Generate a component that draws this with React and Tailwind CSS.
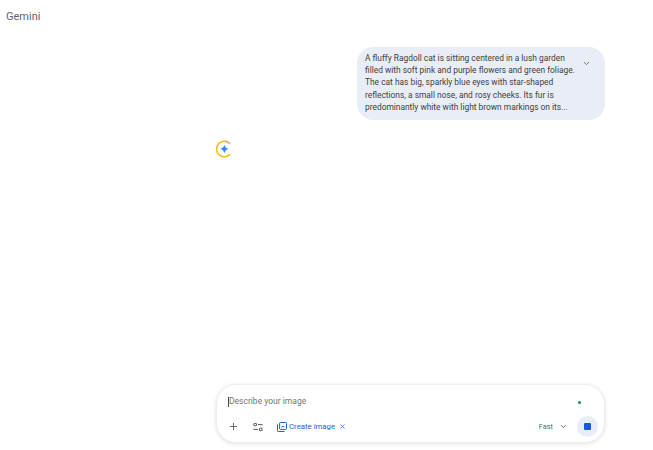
import { Plus, ChevronDown, X } from "lucide-react";

const font = { fontFamily: "Roboto, sans-serif" };

const ToolsIcon = () => (
  <svg width="10" height="10" viewBox="0 0 10 10" fill="none" stroke="#5f6368" strokeWidth="1.1">
    <circle cx="2.2" cy="2.6" r="1.4" />
    <path d="M5 2.6h4.5" />
    <path d="M0.5 7.4h4.5" />
    <circle cx="7.8" cy="7.4" r="1.4" />
  </svg>
);

const CreateImageIcon = () => (
  <svg width="10" height="10" viewBox="0 0 10 10" fill="none" stroke="#1a62d6" strokeWidth="1">
    <rect x="2.6" y="0.5" width="6.9" height="6.9" rx="0.8" />
    <path d="M0.5 2.4v6.3a0.8 0.8 0 0 0 .8 .8h6.3" />
    <path d="M4.6 5.4l1.2-1.4 1 1.1 .5-.5" />
  </svg>
);

const Spinner = () => (
  <svg width="18" height="18" viewBox="1 0 18 18" fill="none">
    <path d="M14.6 3.2A7.8 7.8 0 1 0 14.6 14.8" stroke="#fbbc04" strokeWidth="1.5" strokeLinecap="round" />
    <path d="M14.6 3.2A7.8 7.8 0 0 0 10.5 1.3" stroke="#f6a58a" strokeWidth="1.5" strokeLinecap="round" />
    <path d="M9.4 4.6c.4 2.6 1.6 3.9 4.2 4.4-2.6.5-3.8 1.8-4.2 4.4-.4-2.6-1.6-3.9-4.2-4.4 2.6-.5 3.8-1.8 4.2-4.4z" fill="#3b82f6" />
  </svg>
);

export default function App() {
  return (
    <div className="flex h-[450px] w-[653px] flex-col overflow-hidden bg-white" style={font}>
      <div className="px-[6px] pt-[9px] text-[11px] leading-[15px] text-[#5f6368]">Gemini</div>

      <div className="ml-[216px] flex w-[389px] flex-1 flex-col">
        <div className="mt-[23px] flex w-[248px] self-end rounded-[16px] bg-[#e9eef6] pl-[8px] pr-[14px] pt-[5px] pb-[7px]">
          <p className="w-[214px] text-[8.4px] leading-[12.2px] text-[#3c3f41]">
            A fluffy Ragdoll cat is sitting centered in a lush garden filled with soft pink and purple flowers and green foliage. The cat has big, sparkly blue eyes with star-shaped reflections, a small nose, and rosy cheeks. Its fur is predominantly white with light brown markings on its...
          </p>
          <ChevronDown size={9} strokeWidth={2} className="ml-auto mt-[7px] text-[#444746]" />
        </div>

        <div className="mt-[20px] flex-1">
          <Spinner />
        </div>

        <div className="mb-[7px] flex h-[59px] flex-col rounded-[20px] border border-[#eceef0] bg-white pl-[11px] pr-[6px] shadow-[0_1px_4px_rgba(0,0,0,0.12)]">
          <div className="flex h-[30px] items-center pt-[3px]">
            <span className="h-[10px] w-px bg-[#444746]" />
            <span className="text-[8.5px] text-[#757575]">Describe your image</span>
            <span className="ml-auto mr-[17px] mt-[2px] h-[3px] w-[3px] rounded-full bg-[#0b8a78]" />
          </div>
          <div className="flex flex-1 items-center pb-[4px] text-[7.8px]">
            <Plus size={11} strokeWidth={1.7} className="text-[#444746]" />
            <span className="ml-[14px] flex"><ToolsIcon /></span>
            <span className="ml-[14px] flex"><CreateImageIcon /></span>
            <span className="ml-[2px] text-[#1a62d6]">Create image</span>
            <X size={7} strokeWidth={2.4} className="ml-[4px] text-[#1a62d6]" />
            <span className="ml-auto text-[7.4px] text-[#5f6368]">Fast</span>
            <ChevronDown size={9} strokeWidth={2} className="ml-[6px] text-[#444746]" />
            <span className="ml-[9px] flex h-[21px] w-[21px] items-center justify-center rounded-full bg-[#e9eef6]">
              <span className="h-[7px] w-[7px] rounded-[1px] bg-[#1a56d6]" />
            </span>
          </div>
        </div>
      </div>
    </div>
  );
}
